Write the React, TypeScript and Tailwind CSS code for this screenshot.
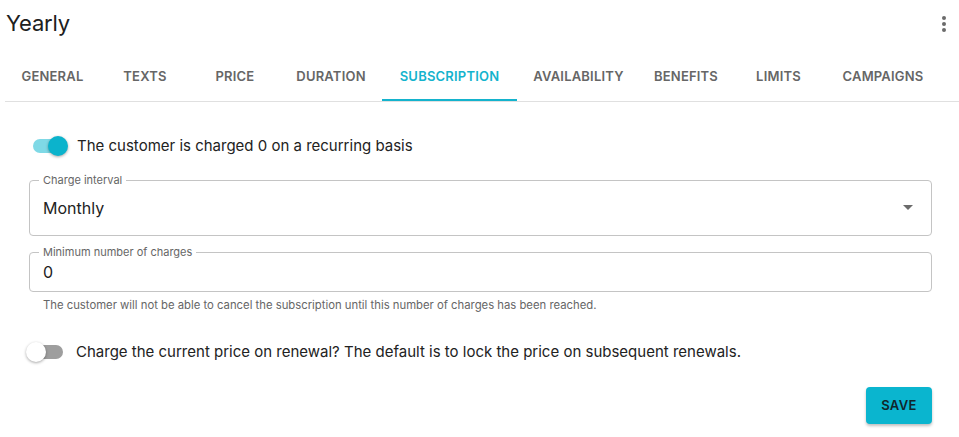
const tabs: { label: string; w: string; active?: boolean }[] = [
  { label: 'GENERAL', w: 'w-[95px]' },
  { label: 'TEXTS', w: 'w-[90px]' },
  { label: 'PRICE', w: 'w-[90px]' },
  { label: 'DURATION', w: 'w-[102px]' },
  { label: 'SUBSCRIPTION', w: 'w-[135px]', active: true },
  { label: 'AVAILABILITY', w: 'w-[123px]' },
  { label: 'BENEFITS', w: 'w-[92px]' },
  { label: 'LIMITS', w: 'w-[93px]' },
  { label: 'CAMPAIGNS', w: 'w-[116px]' },
]

function Toggle({ on }: { on: boolean }) {
  return (
    <div className="relative w-[38px] h-[20px] flex items-center shrink-0">
      <div className={`ml-[3px] w-[34px] h-[14px] rounded-full ${on ? 'bg-[#7fd9e6]' : 'bg-[#9e9e9e]'}`} />
      <div
        className={`absolute top-0 w-[20px] h-[20px] rounded-full shadow-[0_1px_3px_rgba(0,0,0,0.35)] ${
          on ? 'left-[18px] bg-[#0bb3cc]' : 'left-0 bg-white'
        }`}
      />
    </div>
  )
}

function App() {
  return (
    <div className="min-h-screen bg-white text-[#1f1f1f] font-['Inter',sans-serif]">
      <div className="flex items-center justify-between pl-[6px] pr-[8px] pt-[6px] h-[40px]">
        <h1 className="text-[22px] leading-none tracking-[-0.2px] text-[#202020]">Yearly</h1>
        <svg width="6" height="18" viewBox="0 0 6 18" className="mr-[4px] mt-[2px]">
          <circle cx="3" cy="3" r="2" fill="#6b6b6b" />
          <circle cx="3" cy="9" r="2" fill="#6b6b6b" />
          <circle cx="3" cy="15" r="2" fill="#6b6b6b" />
        </svg>
      </div>

      <div className="ml-[5px] mt-[12px] border-b border-[#e0e0e0] flex">
        {tabs.map((t) => (
          <div
            key={t.label}
            className={`${t.w} h-[49px] pt-[2px] flex items-center justify-center text-[13px] font-semibold tracking-[0.2px] ${
              t.active ? 'text-[#14b3cd] border-b-2 border-[#14b3cd]' : 'text-[#666666] border-b-2 border-transparent'
            }`}
          >
            {t.label}
          </div>
        ))}
      </div>

      <div className="pl-[27px] pr-[27px] pt-[34px]">
        <div className="flex items-center gap-[9px] h-[20px] pl-[3px]">
          <Toggle on />
          <span className="text-[15px] text-[#222]">The customer is charged 0 on a recurring basis</span>
        </div>

        <fieldset className="mt-[19px] ml-[2px] h-[61px] border border-[#c4c4c4] rounded-[4px] px-[9px] flex items-center justify-between">
          <legend className="px-[4px] text-[11px] text-[#666] leading-none">Charge interval</legend>
          <span className="text-[16px] text-[#222] -mt-[6px] pl-[4px]">Monthly</span>
          <svg width="10" height="5" viewBox="0 0 10 5" className="-mt-[6px] mr-[9px]">
            <path d="M0 0 L10 0 L5 5 Z" fill="#6b6b6b" />
          </svg>
        </fieldset>

        <fieldset className="mt-[11px] ml-[2px] h-[45px] border border-[#c4c4c4] rounded-[4px] px-[9px] flex items-center">
          <legend className="px-[4px] text-[11px] text-[#666] leading-none">Minimum number of charges</legend>
          <span className="text-[16px] text-[#222] -mt-[6px] pl-[4px]">0</span>
        </fieldset>
        <p className="mt-[5px] ml-[16px] text-[11.3px] text-[#666]">
          The customer will not be able to cancel the subscription until this number of charges has been reached.
        </p>

        <div className="mt-[28px] flex items-center gap-[12px] h-[20px] -ml-[1px]">
          <Toggle on={false} />
          <span className="text-[15px] text-[#222]">
            Charge the current price on renewal? The default is to lock the price on subsequent renewals.
          </span>
        </div>

        <div className="mt-[25px] flex justify-end">
          <button className="w-[66px] h-[37px] rounded-[4px] bg-[#0ab5cf] text-[#10262b] text-[13px] font-semibold tracking-[0.4px] shadow-[0_2px_3px_rgba(0,0,0,0.25)]">
            SAVE
          </button>
        </div>
      </div>
    </div>
  )
}

export default App
